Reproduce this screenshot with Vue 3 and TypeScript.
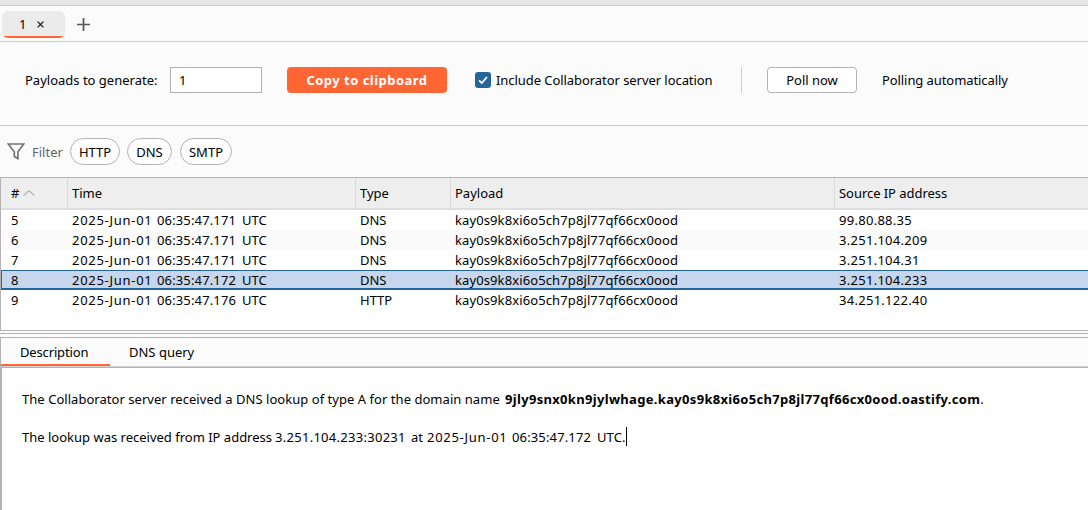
<script setup lang="ts">
import { ref } from 'vue'

interface Interaction {
  id: number
  date: string
  time: string
  type: string
  payload: string
  ip: string
}

const payload = 'kay0s9k8xi6o5ch7p8jl77qf66cx0ood'
const date = '2025-Jun-01'

const interactions: Interaction[] = [
  { id: 5, date, time: '06:35:47.171', type: 'DNS', payload, ip: '99.80.88.35' },
  { id: 6, date, time: '06:35:47.171', type: 'DNS', payload, ip: '3.251.104.209' },
  { id: 7, date, time: '06:35:47.171', type: 'DNS', payload, ip: '3.251.104.31' },
  { id: 8, date, time: '06:35:47.172', type: 'DNS', payload, ip: '3.251.104.233' },
  { id: 9, date, time: '06:35:47.176', type: 'HTTP', payload, ip: '34.251.122.40' },
]

const filters = ['HTTP', 'DNS', 'SMTP']
const detailTabs = ['Description', 'DNS query']

const selected = ref(8)
const count = ref('1')
const activeDetail = ref('Description')
</script>

<template>
  <div class="app">
    <div class="strip"></div>

    <nav class="tabs">
      <div class="tab">
        <span class="tab-name">1</span>
        <svg class="close" width="7" height="7" viewBox="0 0 7 7">
          <path d="M0.6 0.6L6.4 6.4M6.4 0.6L0.6 6.4" stroke="#111" stroke-width="1.2" />
        </svg>
      </div>
      <svg class="add" width="13" height="13" viewBox="0 0 13 13">
        <path d="M6.5 0V13M0 6.5H13" stroke="#555" stroke-width="1.7" />
      </svg>
    </nav>

    <section class="controls">
      <span class="label">Payloads to generate:</span>
      <input v-model="count" class="count" type="text" />
      <button class="copy">Copy to clipboard</button>
      <label class="include">
        <svg width="16" height="16" viewBox="0 0 16 16">
          <rect width="16" height="16" rx="3" fill="#26659c" />
          <path d="M4 8.3L6.8 11L12 5" fill="none" stroke="#fff" stroke-width="1.8" />
        </svg>
        <span>Include Collaborator server location</span>
      </label>
      <span class="divider"></span>
      <button class="poll">Poll now</button>
      <span class="status">Polling automatically</span>
    </section>

    <section class="filters">
      <svg class="funnel" width="18" height="17" viewBox="0 0 18 17">
        <path d="M1.2 1H16.8L10.9 8.8V15.6L7.3 13.4V8.8Z" fill="none" stroke="#757575" stroke-width="1.7" />
      </svg>
      <span class="filter-label">Filter</span>
      <button v-for="f in filters" :key="f" class="chip" :class="f.toLowerCase()">{{ f }}</button>
    </section>

    <section class="table">
      <div class="row head">
        <div class="cell">
          #
          <svg class="sort" width="12" height="6" viewBox="0 0 12 6">
            <path d="M0.5 5.5L6 0.8L11.5 5.5" fill="none" stroke="#b0b0b0" stroke-width="1.1" />
          </svg>
        </div>
        <div class="cell">Time</div>
        <div class="cell">Type</div>
        <div class="cell">Payload</div>
        <div class="cell source">Source IP address</div>
      </div>
      <div
        v-for="item in interactions"
        :key="item.id"
        class="row item"
        :class="{ selected: item.id === selected }"
        @click="selected = item.id"
      >
        <div class="cell">{{ item.id }}</div>
        <div class="cell">
          <span class="date">{{ item.date }}</span><span class="time">{{ item.time }}</span>UTC
        </div>
        <div class="cell">{{ item.type }}</div>
        <div class="cell payload">{{ item.payload }}</div>
        <div class="cell ip">{{ item.ip }}</div>
      </div>
    </section>

    <div class="splitter"></div>

    <section class="detail">
      <nav class="detail-tabs">
        <button
          v-for="t in detailTabs"
          :key="t"
          class="detail-tab"
          :class="{ active: t === activeDetail }"
          @click="activeDetail = t"
        >{{ t }}</button>
      </nav>
      <div class="body">
        <p>
          <span class="intro">The Collaborator server received a DNS lookup of type A for the domain name </span><b>9jly9snx0kn9jylwhage.kay0s9k8xi6o5ch7p8jl77qf66cx0ood.oastify.com</b>.
        </p>
        <p>
          <span class="from">The lookup was received from IP address </span><span class="addr">3.251.104.233:30231</span><span class="at">at</span><span class="date">2025-Jun-01</span><span class="time">06:35:47.172</span><span class="utc">UTC.</span><i class="caret"></i>
        </p>
      </div>
    </section>
  </div>
</template>

<style>
body {
  margin: 0;
  overflow: hidden;
}
</style>

<style scoped>
.app {
  display: flex;
  flex-direction: column;
  width: 1088px;
  height: 510px;
  overflow: hidden;
  background: #fbfbfb;
  color: #000;
  font: 13px/20px "Noto Sans", sans-serif;
}
.app *,
.app {
  box-sizing: border-box;
}
button,
input {
  margin: 0;
  padding: 0;
  font: inherit;
  color: inherit;
  outline: none;
}
svg {
  display: block;
  flex: none;
}
.strip {
  height: 6px;
  flex: none;
  background: #e6e6e6;
  border-bottom: 1px solid #c8c8c8;
}
.tabs {
  display: flex;
  flex: none;
  height: 36px;
  padding: 5px 0 0 2px;
  border-bottom: 1px solid #cdcdcd;
}
.tab {
  display: flex;
  align-items: center;
  width: 63px;
  height: 27px;
  padding: 0 0 1px 17px;
  background: linear-gradient(#ff6633, #ff6633) 2px 25px / 59px 1px no-repeat,
    linear-gradient(#ff6633, #ff6633) 4px 26px / 55px 1px no-repeat, #ebebeb;
  border-radius: 6px;
}
.tab-name {
  width: 18px;
}
.close {
  margin-top: 1px;
}
.add {
  margin: 7px 0 0 12px;
}
.controls {
  display: flex;
  align-items: center;
  flex: none;
  height: 84px;
  padding: 0 0 8px 25px;
  border-bottom: 1px solid #cdcdcd;
  white-space: nowrap;
}
.label {
  width: 145px;
}
.count {
  width: 92px;
  height: 26px;
  padding-left: 8px;
  background: #fff;
  border: 1px solid #b4b2b3;
}
.copy {
  width: 160px;
  height: 26px;
  margin-left: 25px;
  background: #ff6633;
  border: 0;
  border-radius: 4px;
  color: #fff;
  font-weight: bold;
  letter-spacing: 0.48px;
}
.include {
  display: flex;
  align-items: center;
  width: 238px;
  margin-left: 28px;
  gap: 5px;
  letter-spacing: -0.06px;
}
.divider {
  width: 1px;
  height: 26px;
  margin-left: 28px;
  background: #cdcdcd;
}
.poll {
  width: 90px;
  height: 26px;
  margin-left: 25px;
  background: #fff;
  border: 1px solid #b4b2b3;
  border-radius: 4px;
}
.status {
  margin-left: 25px;
  letter-spacing: -0.08px;
}
.filters {
  display: flex;
  align-items: center;
  flex: none;
  height: 51px;
  padding-left: 7px;
}
.filter-label {
  width: 38px;
  margin-left: 7px;
  margin-right: -1px;
  padding-right: 1px;
  color: #666;
}
.chip {
  height: 27px;
  margin-right: 7px;
  background: #fdfdfd;
  border: 1px solid #b4b2b3;
  border-radius: 14px;
}
.chip.http {
  width: 50px;
  margin-left: 1px;
}
.chip.dns {
  width: 45px;
  margin-right: 8px;
}
.chip.smtp {
  width: 52px;
}
.table {
  flex: none;
  height: 154px;
  background: #fff;
  border: 1px solid #b4b2b3;
  border-right: 0;
}
.row {
  display: grid;
  grid-template-columns: 67px 288px 95px 384px 1fr;
  height: 20px;
}
.cell {
  padding-left: 4px;
  white-space: nowrap;
}
.cell:first-child {
  padding-left: 10px;
}
.head {
  height: 32px;
  background: #eeeeee;
  border-bottom: 2px solid #dedede;
  line-height: 30px;
}
.head .cell + .cell {
  box-shadow: -1px 0 #d9d9d9;
}
.head .cell:first-child {
  display: flex;
  align-items: center;
  gap: 4px;
}
.source {
  letter-spacing: -0.05px;
}
.item:nth-child(odd) {
  background: #fafafa;
}
.item.selected {
  background: #c6d6ec;
  box-shadow: inset 1px 1px #26659c, inset 0 -2px #26659c;
}
.date {
  display: inline-block;
  width: 85px;
  letter-spacing: 0.72px;
}
.time {
  display: inline-block;
  width: 85px;
  letter-spacing: 0.14px;
}
.payload {
  letter-spacing: 0.11px;
}
.ip {
  letter-spacing: 0.28px;
}
.splitter {
  flex: none;
  height: 3px;
  border-bottom: 1px solid #b4b2b3;
}
.detail {
  display: flex;
  flex-direction: column;
  flex: 1;
  margin-top: 3px;
  border-top: 1px solid #b4b2b3;
  border-left: 1px solid #b4b2b3;
}
.detail-tabs {
  display: flex;
  flex: none;
  height: 30px;
  border-bottom: 1px solid #b4b2b3;
  box-shadow: inset 0 -1px #d0d0d0;
}
.detail-tab {
  height: 28px;
  width: 109px;
  border: 0;
  border-bottom: 2px solid transparent;
  background: none;
  text-align: left;
  padding: 2px 0 0 19px;
}
.detail-tab.active {
  border-bottom-color: #ff6633;
  letter-spacing: -0.15px;
}
.body {
  flex: 1;
  padding: 21px 0 0 20px;
  background: #fff;
  border-left: 1px solid #b4b2b3;
  white-space: nowrap;
}
p {
  margin: 0 0 18px;
  height: 20px;
}
.intro {
  display: inline-block;
  width: 483px;
  letter-spacing: 0.04px;
}
b {
  letter-spacing: 0.32px;
}
.from {
  display: inline-block;
  width: 253px;
}
.addr {
  display: inline-block;
  width: 136px;
  letter-spacing: 0.28px;
}
.at {
  display: inline-block;
  width: 16px;
}
.utc {
  letter-spacing: 0.1px;
}
.caret {
  display: inline-block;
  width: 1px;
  height: 19px;
  background: #000;
  vertical-align: top;
}
</style>
